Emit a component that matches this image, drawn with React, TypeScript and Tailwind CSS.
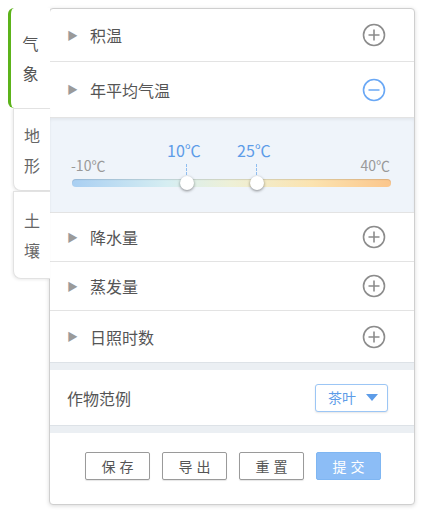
import React from "react";

const font = { fontFamily: '"Noto Sans CJK SC", "Noto Sans", sans-serif' };

function PlusIcon() {
  return (
    <svg width="24" height="24" viewBox="0 0 24 24" fill="none">
      <circle cx="12" cy="12" r="10.5" stroke="#8c8c8c" strokeWidth="1.6" />
      <path d="M12 6.5v11M6.5 12h11" stroke="#8c8c8c" strokeWidth="1.6" />
    </svg>
  );
}

function MinusIcon() {
  return (
    <svg width="24" height="24" viewBox="0 0 24 24" fill="none">
      <circle cx="12" cy="12" r="10.5" stroke="#6aa8f5" strokeWidth="1.6" />
      <path d="M6.5 12h11" stroke="#6aa8f5" strokeWidth="1.6" />
    </svg>
  );
}

function Row({ label, h, open }: { label: string; h: string; open?: boolean }) {
  return (
    <div className={`flex items-center justify-between border-b border-[#e3e3e3] pl-[17px] pr-[28px] ${h}`}>
      <div className="flex items-center">
        <span className="mr-[12px] text-[11px] leading-none text-[#9a9a9a]">▶</span>
        <span className="text-[16px] text-[#555]">{label}</span>
      </div>
      {open ? <MinusIcon /> : <PlusIcon />}
    </div>
  );
}

function Tab({ a, b, active, h }: { a: string; b: string; active?: boolean; h: string }) {
  return (
    <div
      className={
        active
          ? `relative z-10 flex w-[42px] flex-col items-center justify-center gap-[6px] rounded-l-[6px] border-l-[3px] border-[#5cb31a] bg-white text-[16px] text-[#555] ${h}`
          : `relative ml-[5px] flex w-[37px] flex-col items-center justify-center gap-[6px] rounded-bl-[8px] border border-r-0 border-[#e2e2e2] bg-white text-[16px] text-[#666] shadow-[-1px_1px_3px_rgba(0,0,0,0.08)] ${h}`
      }
    >
      <span>{a}</span>
      <span>{b}</span>
    </div>
  );
}

function Btn({ children, primary }: { children: React.ReactNode; primary?: boolean }) {
  return (
    <div
      className={
        primary
          ? "flex h-[28px] w-[65px] items-center justify-center rounded-[2px] border border-[#7fb6f2] bg-[#8cbdf6] text-[14px] tracking-[4px] text-white"
          : "flex h-[28px] w-[65px] items-center justify-center rounded-[2px] border border-[#9a9a9a] bg-white text-[14px] tracking-[4px] text-[#555] shadow-[0_1px_1px_rgba(0,0,0,0.1)]"
      }
    >
      <span className="pl-[4px]">{children}</span>
    </div>
  );
}

export default function App() {
  return (
    <div style={font} className="relative h-[512px] w-[423px] bg-white">
      <div className="flex pl-[8px] pt-[8px]">
        <div className="relative z-10 flex w-[42px] flex-col">
          <Tab a="气" b="象" active h="h-[100px]" />
          <Tab a="地" b="形" h="h-[83px]" />
          <Tab a="土" b="壤" h="h-[88px]" />
        </div>
        <div className="-ml-px flex h-[497px] w-[366px] flex-col overflow-hidden rounded-[4px] border border-[#cfcfcf] bg-white shadow-[0_1px_4px_rgba(0,0,0,0.15)]">
          <Row label="积温" h="h-[53px]" />
          <Row label="年平均气温" h="h-[56px]" open />
          <div className="relative h-[95px] border-b border-[#e3e3e3] bg-[#eff4fa] shadow-[inset_0_2px_3px_rgba(0,0,0,0.05)]">
            <span className="absolute left-[21px] top-[37px] text-[14px] text-[#999]">-10℃</span>
            <span className="absolute right-[24px] top-[37px] text-[14px] text-[#999]">40℃</span>
            <span className="absolute left-[117px] top-[20px] text-[16px] text-[#5d9ce8]">10℃</span>
            <span className="absolute left-[187px] top-[20px] text-[16px] text-[#5d9ce8]">25℃</span>
            <div className="absolute left-[136px] top-[46px] h-[11px] border-l border-dashed border-[#8fbdf0]" />
            <div className="absolute left-[206px] top-[46px] h-[11px] border-l border-dashed border-[#8fbdf0]" />
            <div className="absolute left-[22px] right-[23px] top-[61px] h-[8px] rounded-full bg-[linear-gradient(90deg,#a9cff2_0%,#d6eef2_30%,#eef0d6_50%,#fbe3b0_75%,#fbc68c_100%)] shadow-[inset_0_1px_1px_rgba(0,0,0,0.12)]" />
            <div className="absolute left-[130px] top-[58px] h-[14px] w-[14px] rounded-full bg-white shadow-[0_1px_3px_rgba(0,0,0,0.45)]" />
            <div className="absolute left-[200px] top-[58px] h-[14px] w-[14px] rounded-full bg-white shadow-[0_1px_3px_rgba(0,0,0,0.45)]" />
          </div>
          <Row label="降水量" h="h-[49px]" />
          <Row label="蒸发量" h="h-[49px]" />
          <div className="flex h-[51px] items-center justify-between pl-[17px] pr-[28px]">
            <div className="flex items-center">
              <span className="mr-[12px] text-[11px] leading-none text-[#9a9a9a]">▶</span>
              <span className="text-[16px] text-[#555]">日照时数</span>
            </div>
            <PlusIcon />
          </div>
          <div className="h-[8px] border-t border-[#dde2e7] bg-[#ebeff3]" />
          <div className="flex h-[56px] items-center justify-between border-b border-[#dde2e7] pl-[17px] pr-[26px]">
            <span className="text-[16px] text-[#555]">作物范例</span>
            <div className="flex h-[28px] w-[73px] items-center justify-between rounded-[3px] border border-[#9cc6f5] bg-white pl-[12px] pr-[9px] text-[14px] text-[#5d9ce8] shadow-[0_1px_2px_rgba(0,0,0,0.1)]">
              <span>茶叶</span>
              <svg width="12" height="8" viewBox="0 0 12 8">
                <path d="M0 0h12L6 7z" fill="#5d9ce8" />
              </svg>
            </div>
          </div>
          <div className="h-[7px] bg-[#ebeff3]" />
          <div className="flex gap-[12px] pl-[35px] pt-[19px]">
            <Btn>保存</Btn>
            <Btn>导出</Btn>
            <Btn>重置</Btn>
            <Btn primary>提交</Btn>
          </div>
        </div>
      </div>
    </div>
  );
}
